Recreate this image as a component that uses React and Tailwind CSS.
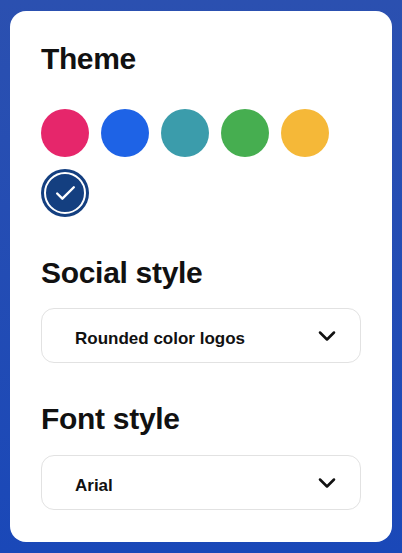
import React from 'react'
import { ChevronDown, Check } from 'lucide-react'

const colors = ['#e6266b', '#1e63e6', '#3b9cab', '#46ae50', '#f5b838']

function Select({ value }) {
    return (
        <div className="flex items-center justify-between h-[55px] rounded-[13px] border border-[#e2e2e2] pl-[33px] pr-[19px]">
            <span className="pt-[6px] text-[17px] leading-5 font-bold text-[#111]">{value}</span>
            <ChevronDown size={28} strokeWidth={2.2} className="text-[#111]" />
        </div>
    )
}

export default function App() {
    const [selected, setSelected] = React.useState(5)

    return (
        <div className="w-[402px] h-[553px] bg-gradient-to-b from-[#2b50b0] to-[#1a48b8] pt-[11px] px-[10px] font-['Liberation_Sans',Arial,sans-serif]">
            <div className="bg-white rounded-2xl pt-[30px] px-[31px] pb-[32px]">

                {/* Theme */}
                <h2 className="text-[30px] leading-[36px] font-bold tracking-[-0.4px] text-[#111]">Theme</h2>
                <div className="flex flex-wrap gap-3 mt-[32px]">
                    {colors.map((c, i) => (
                        <button
                            key={c}
                            onClick={() => setSelected(i)}
                            className="w-12 h-12 rounded-full"
                            style={{ background: c }}
                        />
                    ))}
                    <button
                        onClick={() => setSelected(5)}
                        className="w-12 h-12 rounded-full bg-[#143f80] flex items-center justify-center"
                    >
                        <span className="w-[42px] h-[42px] rounded-full border-2 border-white flex items-center justify-center">
                            {selected === 5 && <Check size={25} strokeWidth={2.3} className="text-white" />}
                        </span>
                    </button>
                </div>

                {/* Social style */}
                <h2 className="text-[30px] leading-[36px] font-bold tracking-[-0.3px] text-[#111] mt-[38px]">Social style</h2>
                <div className="mt-[17px]">
                    <Select value="Rounded color logos" />
                </div>

                {/* Font style */}
                <h2 className="text-[30px] leading-[36px] font-bold tracking-[-0.3px] text-[#111] mt-[38px]">Font style</h2>
                <div className="mt-[18px]">
                    <Select value="Arial" />
                </div>
            </div>
        </div>
    )
}
